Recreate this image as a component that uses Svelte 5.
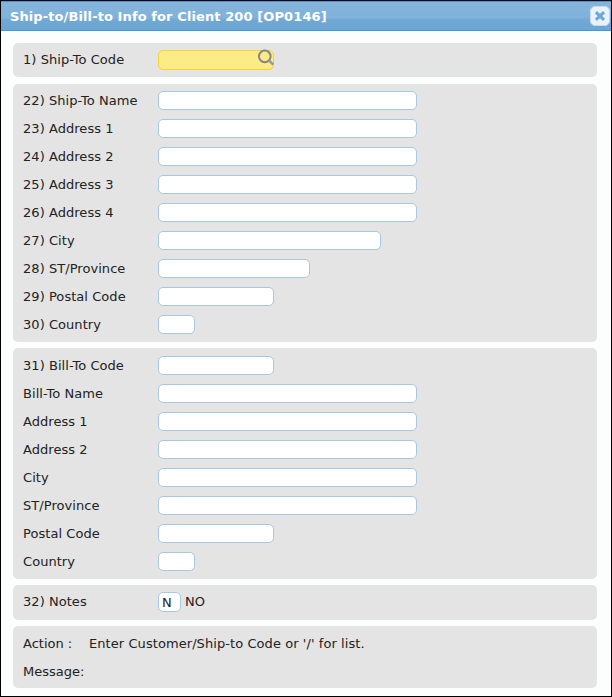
<script lang="ts">
  type Field = { label: string; width: number };

  const shipTo: Field[] = [
    { label: "22) Ship-To Name", width: 259 },
    { label: "23) Address 1", width: 259 },
    { label: "24) Address 2", width: 259 },
    { label: "25) Address 3", width: 259 },
    { label: "26) Address 4", width: 259 },
    { label: "27) City", width: 223 },
    { label: "28) ST/Province", width: 152 },
    { label: "29) Postal Code", width: 116 },
    { label: "30) Country", width: 37 },
  ];

  const billTo: Field[] = [
    { label: "31) Bill-To Code", width: 116 },
    { label: "Bill-To Name", width: 259 },
    { label: "Address 1", width: 259 },
    { label: "Address 2", width: 259 },
    { label: "City", width: 259 },
    { label: "ST/Province", width: 259 },
    { label: "Postal Code", width: 116 },
    { label: "Country", width: 37 },
  ];

  let notes = $state("N");
</script>

{#snippet row(field: Field)}
  <label class="row">
    <span class="label">{field.label}</span>
    <input style:width="{field.width}px" />
  </label>
{/snippet}

<div class="dialog">
  <header>
    <h1>Ship-to/Bill-to Info for Client 200 [OP0146]</h1>
    <button class="close" aria-label="Close">
      <svg width="10" height="10" viewBox="0 0 10 10">
        <path d="M2 2.2l6 5.6M8 2.2l-6 5.6" stroke="#6da8d5" stroke-width="3" stroke-linecap="square" />
      </svg>
    </button>
  </header>

  <main>
    <section class="code">
      <div class="row tall">
        <label class="label" for="shipcode">1) Ship-To Code</label>
        <div class="lookup">
          <input id="shipcode" class="active" />
          <svg class="search" width="18" height="18" viewBox="0 0 18 18">
            <circle cx="7.8" cy="7.4" r="5.8" fill="none" stroke="#858585" stroke-width="2" />
            <path d="M11.8 11.4l4.6 4.2" stroke="#999" stroke-width="2.6" />
          </svg>
        </div>
      </div>
    </section>

    <section class="ship">
      {#each shipTo as field}
        {@render row(field)}
      {/each}
    </section>

    <section class="bill">
      {#each billTo as field}
        {@render row(field)}
      {/each}
    </section>

    <section class="notes">
      <div class="row tall">
        <label class="label" for="notes">32) Notes</label>
        <input id="notes" bind:value={notes} />
        <span class="answer">NO</span>
      </div>
    </section>

    <section class="status">
      <div class="row">
        <span class="action">Action :</span>
        <span class="hint">Enter Customer/Ship-to Code or '/' for list.</span>
      </div>
      <div class="row"><span>Message:</span></div>
    </section>
  </main>
</div>

<style>
  :global(body) { margin: 0; }
  .dialog {
    box-sizing: border-box; width: 612px; height: 697px; overflow: hidden;
    border: 1px solid #000; background: #fcfdfd; color: #222;
    font: 13px/19px Verdana, "DejaVu Sans", sans-serif;
  }
  header {
    box-sizing: border-box; height: 30px; padding: 0 1px 0 9px;
    display: flex; align-items: center; justify-content: space-between;
    border-top: 1px solid #4297d7; border-bottom: 1px solid #4297d7;
    background: linear-gradient(#84b4da, #81b2da 55%, #70a8d5 65%, #6ca6d3);
  }
  h1 {
    margin: 0; color: #fff; font-size: 13px; line-height: 19px; font-weight: bold;
    letter-spacing: 0.1px; white-space: nowrap;
  }
  .close {
    box-sizing: border-box; width: 20px; height: 20px; padding: 0;
    display: flex; align-items: center; justify-content: center;
    border: 1px solid #c5dbec; border-radius: 5px; background: #e8f2fa;
  }
  main { display: flex; flex-direction: column; padding: 12px 14px 0 12px; }
  section {
    box-sizing: border-box; display: flex; flex-direction: column; gap: 9px;
    padding: 7px 10px; border-radius: 5px; background: #e4e4e4;
  }
  .code { height: 34px; margin-bottom: 7px; }
  .ship { height: 258px; margin-bottom: 6px; }
  .bill { height: 231px; margin-bottom: 6px; padding-top: 8px; }
  .notes { height: 35px; margin-bottom: 6px; }
  .status { height: 62px; padding-top: 8px; }
  .row { display: flex; height: 19px; white-space: nowrap; }
  .tall { height: 20px; }
  .label { width: 135px; flex: none; letter-spacing: 0.05px; }
  input {
    box-sizing: border-box; height: 100%; margin: 0; padding: 1px 3px 0;
    border: 1px solid #a6c9e2; border-radius: 5px; outline: none;
    background: #fff; color: #222; font: inherit;
  }
  .lookup { position: relative; width: 116px; height: 20px; }
  .active { width: 116px; border-color: #fad42e; background: #fbec88; vertical-align: top; }
  .search { position: absolute; top: -1px; right: -1px; }
  #notes { width: 23px; }
  .answer { margin-left: 4px; }
  .action { width: 66px; }
  .hint { letter-spacing: 0.07px; }
</style>
